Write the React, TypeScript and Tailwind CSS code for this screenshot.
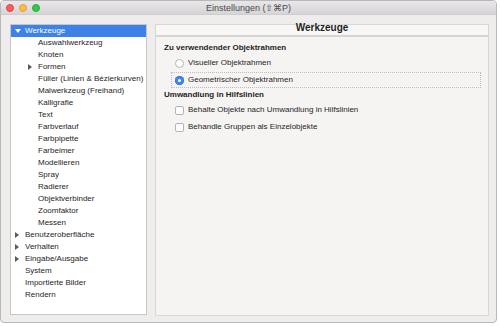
import React from 'react';

type Item = { label: string; level: 0 | 1; arrow?: 'right' | 'down'; selected?: boolean };

const items: Item[] = [
  { label: 'Werkzeuge', level: 0, arrow: 'down', selected: true },
  { label: 'Auswahlwerkzeug', level: 1 },
  { label: 'Knoten', level: 1 },
  { label: 'Formen', level: 1, arrow: 'right' },
  { label: 'Füller (Linien & Bézierkurven)', level: 1 },
  { label: 'Malwerkzeug (Freihand)', level: 1 },
  { label: 'Kalligrafie', level: 1 },
  { label: 'Text', level: 1 },
  { label: 'Farbverlauf', level: 1 },
  { label: 'Farbpipette', level: 1 },
  { label: 'Farbeimer', level: 1 },
  { label: 'Modellieren', level: 1 },
  { label: 'Spray', level: 1 },
  { label: 'Radierer', level: 1 },
  { label: 'Objektverbinder', level: 1 },
  { label: 'Zoomfaktor', level: 1 },
  { label: 'Messen', level: 1 },
  { label: 'Benutzeroberfläche', level: 0, arrow: 'right' },
  { label: 'Verhalten', level: 0, arrow: 'right' },
  { label: 'Eingabe/Ausgabe', level: 0, arrow: 'right' },
  { label: 'System', level: 0 },
  { label: 'Importierte Bilder', level: 0 },
  { label: 'Rendern', level: 0 },
];

function Arrow({ dir, white }: { dir: 'right' | 'down'; white?: boolean }) {
  if (dir === 'down') {
    return (
      <svg width="6" height="4" viewBox="0 0 6 4" className="block">
        <path d="M0 0 L6 0 L3 4 Z" fill={white ? '#ffffff' : '#555'} />
      </svg>
    );
  }
  return (
    <svg width="4" height="6" viewBox="0 0 4 6" className="block">
      <path d="M0 0 L4 3 L0 6 Z" fill="#5a5a5a" />
    </svg>
  );
}

function TreeRow({ item }: { item: Item }) {
  return (
    <div
      className={`flex h-[12px] items-center ${item.selected ? 'bg-[#3d82e8] text-white' : 'text-[#1e1e1e]'} ${
        item.level === 0 ? 'pl-[4px]' : 'pl-[17px]'
      }`}
    >
      <div className="flex w-[10px] shrink-0 items-center">
        {item.arrow && <Arrow dir={item.arrow} white={item.selected} />}
      </div>
      <span className={`whitespace-nowrap leading-[12px] ${item.level === 1 && !item.arrow ? 'pl-0' : ''}`}>
        {item.label}
      </span>
    </div>
  );
}

function Radio({ checked }: { checked?: boolean }) {
  if (checked) {
    return (
      <div className="flex h-[9px] w-[9px] shrink-0 items-center justify-center rounded-full bg-[#3b84f5] shadow-[inset_0_0_0_0.5px_#2a6fd8]">
        <div className="h-[3px] w-[3px] rounded-full bg-white" />
      </div>
    );
  }
  return <div className="h-[9px] w-[9px] shrink-0 rounded-full border border-[#b4b4b4] bg-white" />;
}

function Check() {
  return <div className="h-[9px] w-[9px] shrink-0 rounded-[2px] border border-[#b4b4b4] bg-white" />;
}

export default function App() {
  return (
    <div className="h-[326px] w-[500px] bg-white font-['Liberation_Sans','DejaVu_Sans',sans-serif] text-[8px]">
      <div className="flex h-[323px] w-[497px] flex-col overflow-hidden rounded-[4px] border border-[#b9b9b9] bg-[#eeedec]">
        {/* title bar */}
        <div className="relative flex h-[14px] shrink-0 items-center justify-center border-b border-[#cfcdcf] bg-gradient-to-b from-[#e9e7e9] to-[#d6d4d6]">
          <div className="absolute left-[5px] top-[3px] flex gap-[5px]">
            <div className="h-[8px] w-[8px] rounded-full border-[0.5px] border-[#e0443e] bg-[#fc605c]" />
            <div className="h-[8px] w-[8px] rounded-full border-[0.5px] border-[#dea236] bg-[#fdbc40]" />
            <div className="h-[8px] w-[8px] rounded-full border-[0.5px] border-[#27aa35] bg-[#34c84a]" />
          </div>
          <span className="text-[9px] leading-[14px] text-[#4b4b4b]">Einstellungen (⇧⌘P)</span>
        </div>

        {/* body */}
        <div className="flex gap-[8px] pl-[9px] pt-[9px]">
          <div className="h-[291px] w-[137px] shrink-0 border border-[#c6c6c6] bg-white">
            {items.map((it) => (
              <TreeRow key={it.label} item={it} />
            ))}
          </div>

          <div className="flex h-[292px] w-[334px] flex-col border border-[#d9d8d6] bg-[#f5f4f3]">
            <div className="flex h-[12px] shrink-0 justify-center border-b-2 border-[#d6d5d3] bg-[#f7f7f6]">
              <span className="text-[10px] font-bold leading-[6px] text-[#1e1e1e]">Werkzeuge</span>
            </div>
            <div className="flex flex-col gap-[1px] pl-[8px] pr-[7px] pt-[5px] text-[#1e1e1e]">
              <div className="flex h-[12px] items-center font-bold">Zu verwendender Objektrahmen</div>
              <div className="ml-[7px] flex h-[16px] items-center gap-[4px] border border-transparent pl-[3px]">
                <Radio />
                <span>Visueller Objektrahmen</span>
              </div>
              <div className="ml-[7px] flex h-[16px] items-center gap-[4px] border border-dotted border-[#bdbdbd] pl-[3px]">
                <Radio checked />
                <span>Geometrischer Objektrahmen</span>
              </div>
              <div className="flex h-[12px] items-center font-bold">Umwandlung in Hilfslinien</div>
              <div className="ml-[7px] flex h-[16px] items-center gap-[4px] border border-transparent pl-[3px]">
                <Check />
                <span>Behalte Objekte nach Umwandlung in Hilfslinien</span>
              </div>
              <div className="ml-[7px] flex h-[16px] items-center gap-[4px] border border-transparent pl-[3px]">
                <Check />
                <span>Behandle Gruppen als Einzelobjekte</span>
              </div>
            </div>
          </div>
        </div>
      </div>
    </div>
  );
}
